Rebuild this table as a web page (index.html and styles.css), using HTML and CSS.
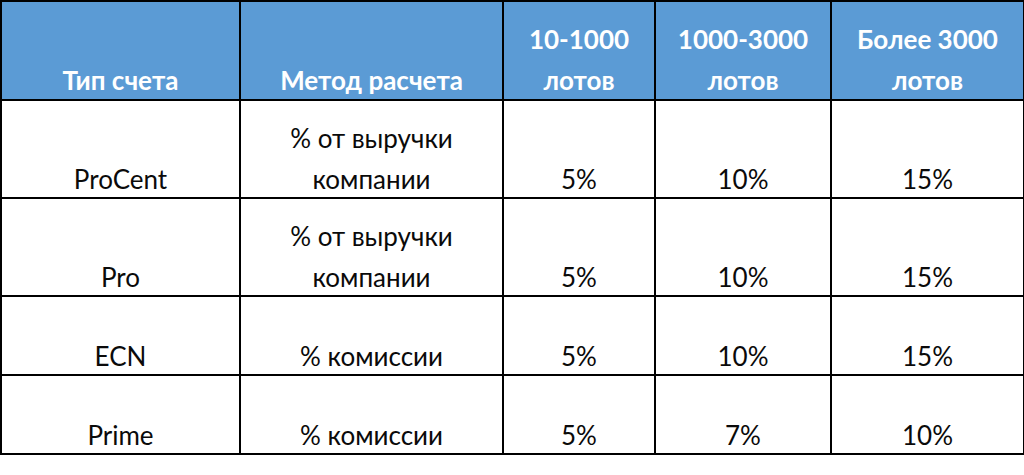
FILE: index.html
```html
<!DOCTYPE html>
<html lang="ru">
<head>
<meta charset="utf-8">
<title>Таблица</title>
<link rel="stylesheet" href="styles.css">
</head>
<body>
<table class="rates">
  <colgroup>
    <col class="c1"><col class="c2"><col class="c3"><col class="c4"><col class="c5">
  </colgroup>
  <thead>
    <tr class="head">
      <th><div class="txt">Тип счета</div></th>
      <th><div class="txt">Метод расчета</div></th>
      <th><div class="txt">10-1000<br>лотов</div></th>
      <th><div class="txt">1000-3000<br>лотов</div></th>
      <th><div class="txt">Более 3000<br>лотов</div></th>
    </tr>
  </thead>
  <tbody>
    <tr class="tall">
      <td><div class="txt">ProCent</div></td>
      <td><div class="txt">% от выручки<br>компании</div></td>
      <td><div class="txt">5%</div></td>
      <td><div class="txt">10%</div></td>
      <td><div class="txt">15%</div></td>
    </tr>
    <tr class="tall">
      <td><div class="txt">Pro</div></td>
      <td><div class="txt">% от выручки<br>компании</div></td>
      <td><div class="txt">5%</div></td>
      <td><div class="txt">10%</div></td>
      <td><div class="txt">15%</div></td>
    </tr>
    <tr class="short">
      <td><div class="txt">ECN</div></td>
      <td><div class="txt">% комиссии</div></td>
      <td><div class="txt">5%</div></td>
      <td><div class="txt">10%</div></td>
      <td><div class="txt">15%</div></td>
    </tr>
    <tr class="short">
      <td><div class="txt">Prime</div></td>
      <td><div class="txt">% комиссии</div></td>
      <td><div class="txt">5%</div></td>
      <td><div class="txt">7%</div></td>
      <td><div class="txt">10%</div></td>
    </tr>
  </tbody>
</table>
</body>
</html>
```
FILE: styles.css
```css
html, body {
  margin: 0;
  padding: 0;
  background: #ffffff;
}

.rates {
  border-collapse: collapse;
  table-layout: fixed;
  width: 1023px;
  font-family: "Lato", "Open Sans", sans-serif;
  font-size: 26px;
  line-height: 41px;
  color: #0a0a0a;
}

.c1 { width: 239px; }
.c2 { width: 263px; }
.c3 { width: 152px; }
.c4 { width: 176px; }
.c5 { width: 193px; }

.rates th,
.rates td {
  border: 2px solid #000;
  text-align: center;
  vertical-align: bottom;
  padding: 0;
}

.rates th {
  background: #5b9bd5;
  color: #ffffff;
  font-weight: 700;
}

.rates th .txt { margin-bottom: -2px; }
.rates td .txt { margin-bottom: -3px; }

.head { height: 99px; }
.tall { height: 98px; }
.short { height: 79px; }
```
